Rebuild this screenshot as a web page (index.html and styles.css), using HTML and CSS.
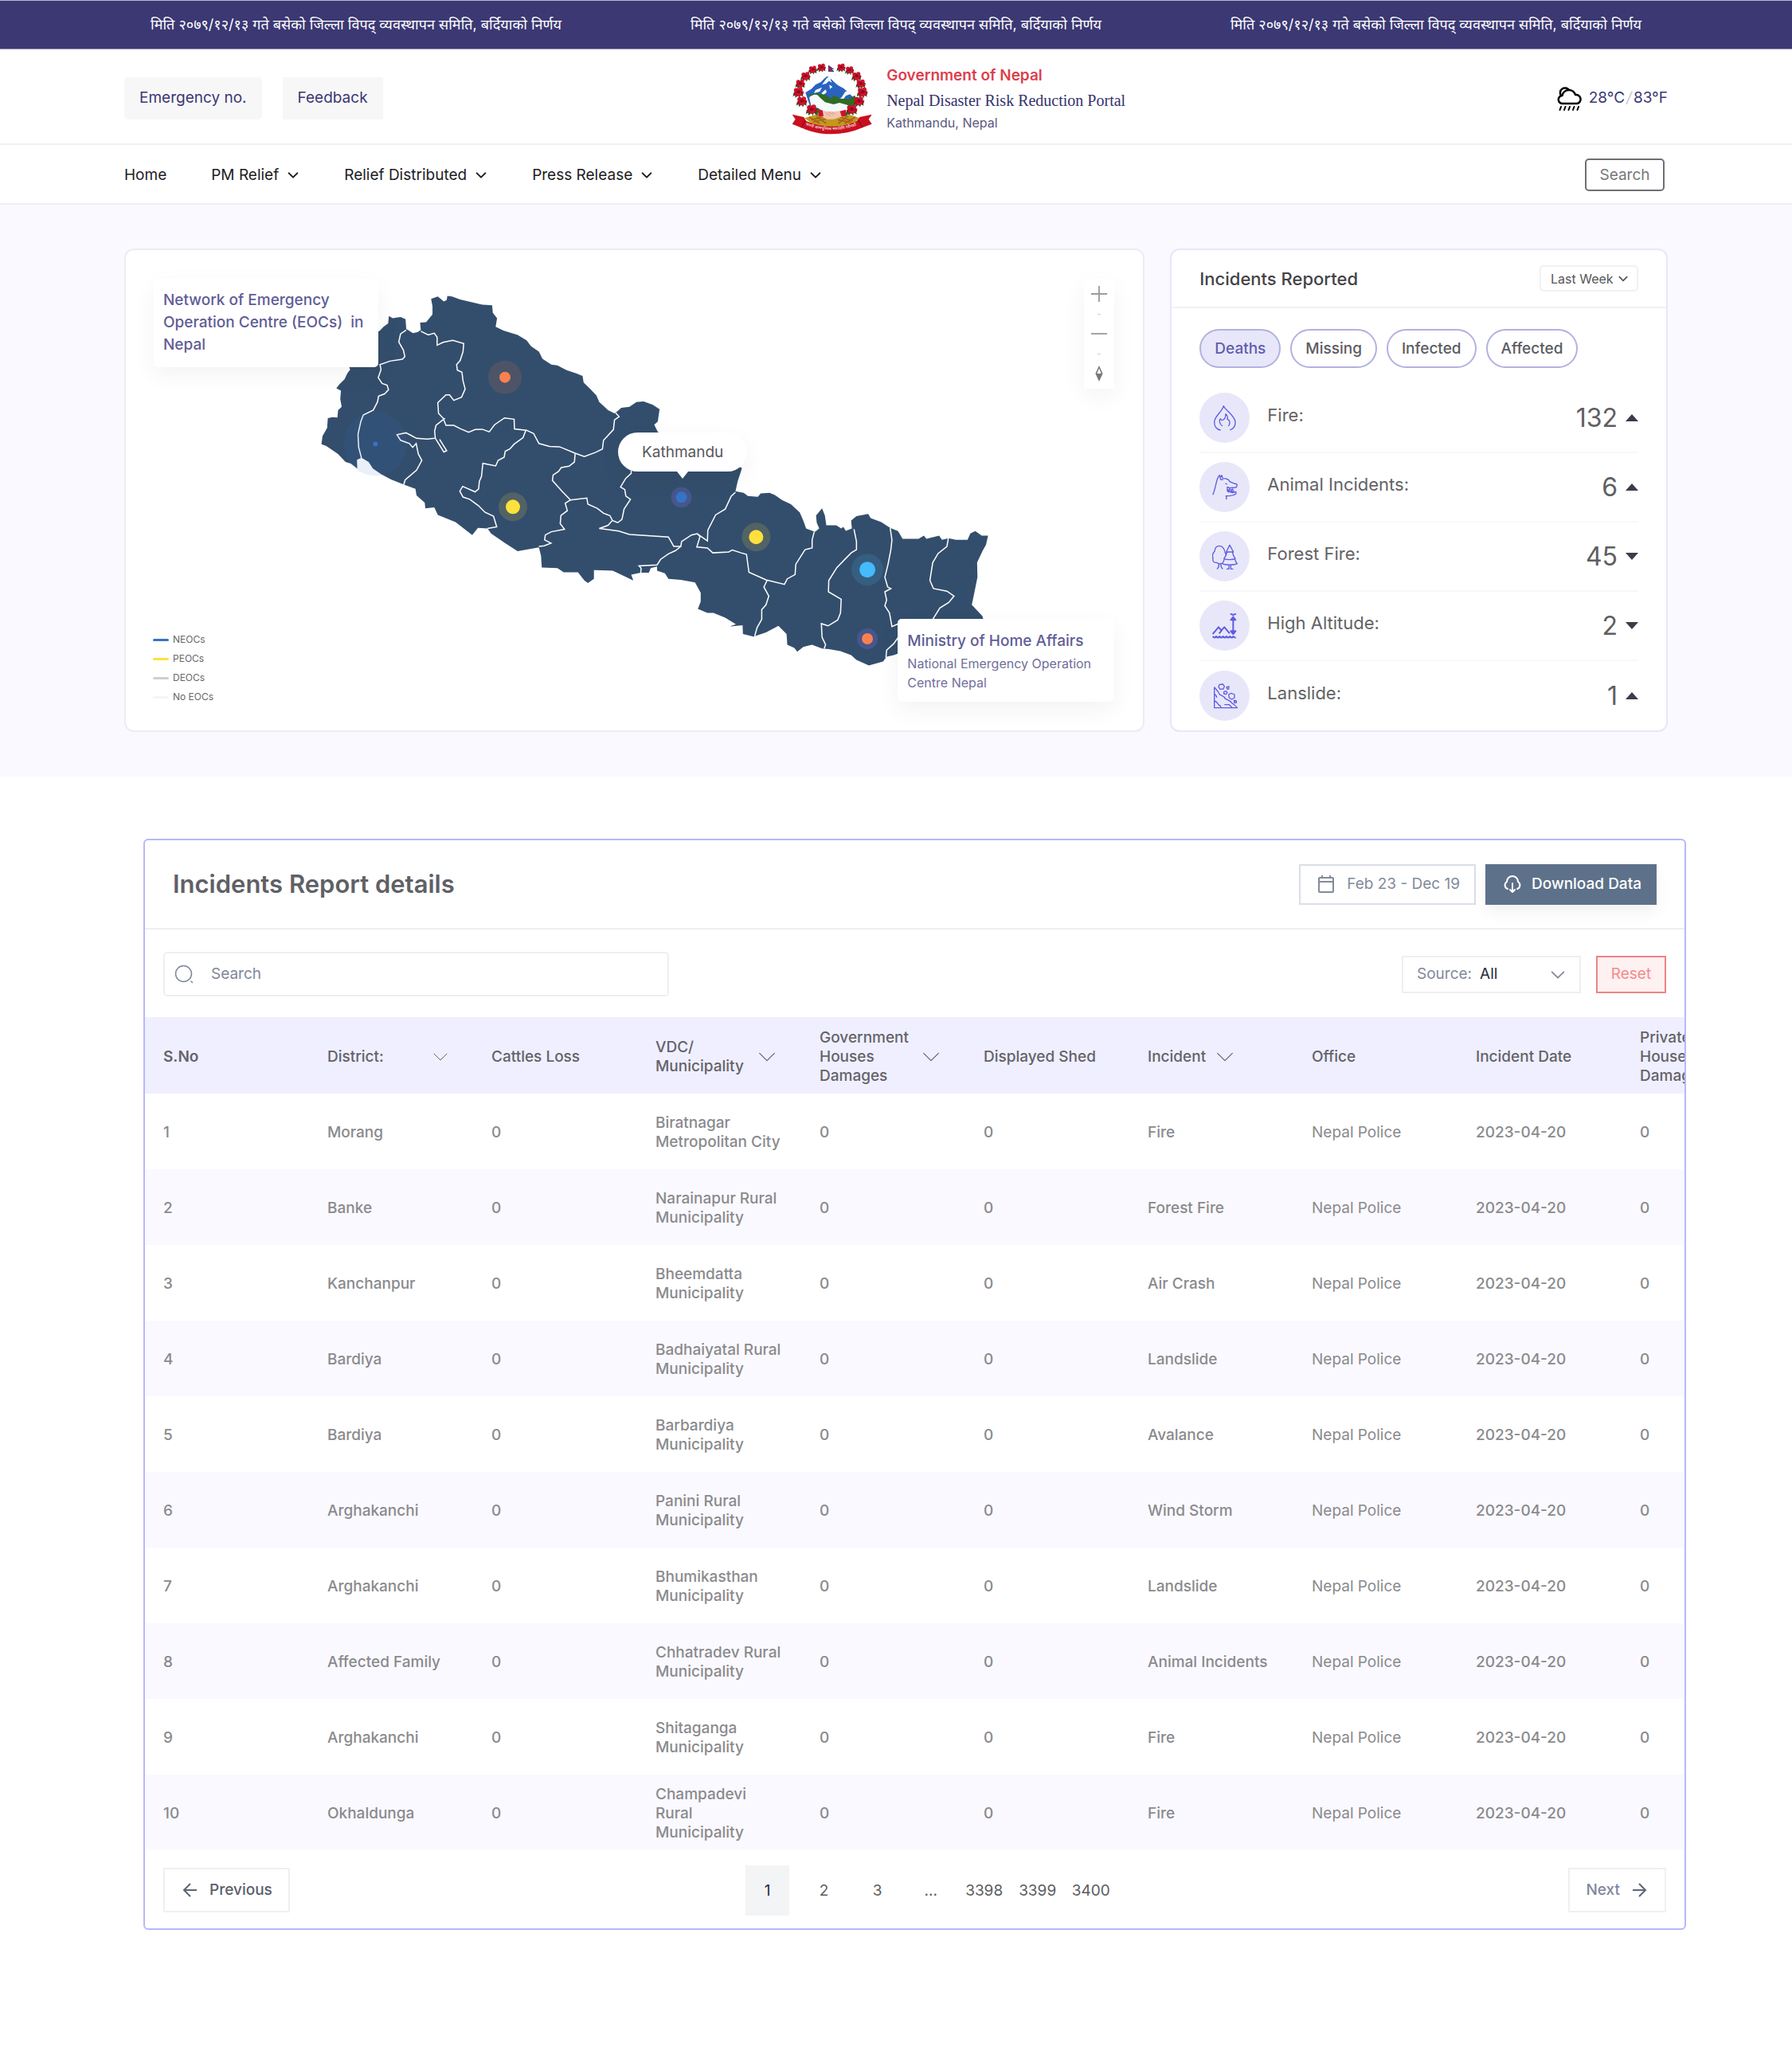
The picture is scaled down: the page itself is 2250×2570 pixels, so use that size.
FILE: index.html
```html
<!DOCTYPE html>
<html lang="en">
<head>
    <meta charset="UTF-8">
    <meta name="viewport" content="width=device-width, initial-scale=1.0">
    <title>Nepal Disaster Risk Reduction Portal</title>
    <link rel="stylesheet" href="styles.css">
</head>
<body>
    <!-- shared shapes -->
    <svg class="sprite" aria-hidden="true">
        <symbol id="chevron" viewBox="0 0 24 24"><path d="M4 8l8 8 8-8" fill="none" stroke="currentColor" stroke-linecap="round" stroke-linejoin="round"/></symbol>
        <symbol id="flower" viewBox="-20 -20 40 40">
            <path d="M-17 2l-3 14 8-6 1 10 9-8 6 9 2-10 10 5-3-12 6-7z" fill="#1f5a20"/>
            <circle cx="-8" cy="-6" r="8" fill="#c8102e"/><circle cx="6" cy="-8" r="8" fill="#d3142f"/>
            <circle cx="10" cy="3" r="7" fill="#b50d26"/><circle cx="-9" cy="5" r="7" fill="#b50d26"/>
            <circle cx="1" cy="7" r="8" fill="#d3142f"/><circle cx="0" cy="-1" r="6" fill="#8f0a1c"/>
        </symbol>
    </svg>

    <div class="ticker">
        <span>मिति २०७९/१२/१३ गते बसेको जिल्ला विपद् व्यवस्थापन समिति, बर्दियाको निर्णय</span>
        <span>मिति २०७९/१२/१३ गते बसेको जिल्ला विपद् व्यवस्थापन समिति, बर्दियाको निर्णय</span>
        <span>मिति २०७९/१२/१३ गते बसेको जिल्ला विपद् व्यवस्थापन समिति, बर्दियाको निर्णय</span>
    </div>

    <header class="header">
        <div class="header-links">
            <a class="chip rounded" href="#">Emergency no.</a>
            <a class="chip" href="#">Feedback</a>
        </div>
        <div class="brand">
            <svg class="emblem" viewBox="0 0 345 300" role="img" aria-label="Emblem of Nepal">
                <!-- mountains and hills -->
                <path d="M70 130l22-14 16-16 20-10 14-14 10-8 12 8 14 14 14 12 22 12 20 18 24 24-10 46H94z" fill="#2a62c0"/>
                <path d="M150 76l10-8 12 8-8 4 6 12-12-6-10 10-16 4zM108 120l24-10-8 16-22 6zM130 132l16-14 4 10-14 12zM206 148l14-22 14-2 4 12-16 6-10 14-22 4zM160 100l12 8-10 8z" fill="#f2f8fb"/>
                <path d="M84 138l28-6 34 6 20 14 12-12 22 12 32 2 24-14 8 22-14 34-24 20H110l-20-30z" fill="#2f6b23"/>
                <path d="M84 148c14-12 30-16 38-2l22 20 32 8 22-6 34 10 4 16-16 14-40 6-34-6-28-20-26-6z" fill="#f4fafb"/>
                <!-- wheat base and hands -->
                <path d="M66 226l40-12 68 12 64-12 36 12-24 20c-48 22-108 22-156 0z" fill="#c09a1a"/>
                <path d="M92 232l52-12M100 240l50-12M196 222l52 14M192 232l50 10M84 222l40 24M258 222l-40 24M112 220l36 26M230 218l-36 28" stroke="#a8611d" stroke-width="5"/>
                <path d="M118 196l32 4 24 2 30-4 14 10-14 14-28 8-26 0-22-12-12-4z" fill="#f3c3ae"/>
                <path d="M146 206l18 12M156 202l18 12M168 202l14 10" stroke="#c98871" stroke-width="2"/>
                <path d="M116 196h18l4 22-18 2zM200 200l22-6 2 24-18 2z" fill="#c9152f"/>
                <!-- wreath -->
                <g>
                    <use href="#flower" x="113" y="17" width="36" height="36"/><use href="#flower" x="80" y="25" width="36" height="36"/>
                    <use href="#flower" x="51" y="48" width="40" height="40"/><use href="#flower" x="31" y="76" width="40" height="40"/>
                    <use href="#flower" x="22" y="106" width="44" height="44"/><use href="#flower" x="35" y="140" width="44" height="44"/>
                    <use href="#flower" x="71" y="170" width="46" height="46"/>
                    <use href="#flower" x="187" y="17" width="36" height="36"/><use href="#flower" x="219" y="27" width="36" height="36"/>
                    <use href="#flower" x="243" y="48" width="40" height="40"/><use href="#flower" x="259" y="76" width="40" height="40"/>
                    <use href="#flower" x="263" y="106" width="44" height="44"/><use href="#flower" x="250" y="140" width="44" height="44"/>
                    <use href="#flower" x="222" y="170" width="46" height="46"/>
                </g>
                <path d="M157 28v22h20l-12-9h10z" fill="#c9152f" stroke="#243a8f" stroke-width="3"/>
                <!-- ribbon -->
                <path d="M20 212l44 10 8 14c60 28 140 28 192 0l10-14 46-10-12 18 12 18-36 14c-70 32-160 32-230 0l-34-14 12-18z" fill="#c9101f"/>
                <path d="M54 262l16-28M284 262l-14-28" stroke="#7d0a14" stroke-width="3"/>
                <path id="motto" d="M70 252q102 40 208-4" fill="none"/>
                <text class="motto"><textPath href="#motto">जननी जन्मभूमिश्च स्वर्गादपि गरीयसी</textPath></text>
            </svg>
            <div>
                <div class="brand-gov">Government of Nepal</div>
                <div class="brand-name">Nepal Disaster Risk Reduction Portal</div>
                <div class="brand-place">Kathmandu, Nepal</div>
            </div>
        </div>
        <div class="weather">
            <svg width="32" height="32" viewBox="0 0 32 32" fill="none" stroke="#000" stroke-width="2.500" stroke-linecap="round" stroke-linejoin="round">
                <path d="M5 13a6 6 0 1 1 10-7"/>
                <path d="M7 23a5 5 0 0 1-.5-10A8.500 8.500 0 0 1 23 12a5.500 5.500 0 0 1 2 11z"/>
                <path d="M5 27l-1.500 4M10.500 27L9 31M16 27l-1.500 4M21.500 27L20 31M27 27l-1.500 4" stroke-width="2"/>
            </svg>
            <span>28°C<i>/</i>83°F</span>
        </div>
    </header>

    <nav class="nav">
        <a href="#">Home</a>
        <a href="#">PM Relief <svg><use href="#chevron"/></svg></a>
        <a href="#">Relief Distributed <svg><use href="#chevron"/></svg></a>
        <a href="#">Press Release <svg><use href="#chevron"/></svg></a>
        <a href="#">Detailed Menu <svg><use href="#chevron"/></svg></a>
        <button class="nav-search" type="button">Search</button>
    </nav>

    <section class="hero">
        <div class="map-card">
            <svg class="map" viewBox="0 0 1280 604" role="img" aria-label="Map of Nepal">
                <g transform="translate(-7 -13) scale(.4464 .4082)">
                    <path class="land" d="M567 630L570 605 583 580 585 550 598 547 612 548 614 525 624 515 620 490 622 465 609 458 618 445 632 430 640 412 648 400 645 392 700 300 732 280 742 268 755 258 757 235 768 242 790 238 804 245 806 275 825 288 838 285 847 278 845 255 862 254 880 230 880 205 876 182 895 175 912 190 920 186 922 173 935 175 958 184 1020 200 1048 202 1050 225 1062 242 1058 268 1080 280 1120 293 1145 310 1158 328 1180 345 1190 367 1215 385 1232 387 1258 402 1285 412 1303 420 1306 440 1325 460 1342 480 1350 500 1375 525 1393 535 1402 528 1412 518 1435 515 1455 500 1475 498 1500 508 1520 522 1515 560 1505 570 1515 592 1600 640 1752 703 1750 712 1740 745 1734 775 1757 780 1769 790 1797 792 1805 782 1830 780 1845 787 1865 802 1890 815 1915 840 1925 865 1933 890 1958 900 1970 890 1963 872 1961 850 1978 828 1986 850 1990 880 2018 880 2032 890 2038 885 2045 897 2062 890 2060 865 2075 852 2108 845 2115 858 2145 870 2170 888 2192 898 2205 922 2250 922 2265 912 2272 922 2308 912 2316 925 2335 920 2355 925 2388 925 2396 905 2410 898 2428 912 2446 912 2440 940 2430 960 2415 995 2416 1040 2405 1100 2400 1125 2430 1160 2432 1168 2420 1200 2200 1272 2180 1280 2160 1285 2150 1300 2110 1312 2075 1295 2060 1280 2030 1268 1998 1262 1978 1260 1950 1248 1925 1255 1908 1270 1900 1258 1880 1248 1878 1215 1855 1190 1820 1210 1785 1223 1755 1215 1754 1188 1718 1192 1735 1185 1705 1165 1672 1150 1655 1150 1628 1138 1636 1115 1636 1088 1620 1056 1580 1048 1545 1045 1535 1028 1513 1020 1513 1007 1495 1012 1490 1026 1467 1026 1440 1032 1446 1050 1388 1020 1335 1018 1335 1045 1318 1058 1308 1050 1290 1025 1250 1025 1232 1012 1188 1010 1186 975 1180 948 1145 955 1120 960 1085 935 1045 905 1035 890 1008 888 992 910 945 870 895 848 885 825 860 828 858 810 835 788 832 768 800 755 762 738 735 722 712 705 700 685 680 672 667 678 668 705 650 690 635 685 613 660 580 635z"/>
                    <g class="borders">
                        <path d="M806 278L790 290 785 315 798 340 802 360 795 368 760 374 732 385 735 400 727 425 738 443 752 448 756 462 745 475 728 482 725 500 713 525 685 540 678 560 670 600 672 640 678 665 680 675"/>
                        <path d="M847 282L868 293 885 288 893 300 893 325 910 316 937 310 968 320 966 345 958 372 948 385 950 402 963 408 966 435 972 460 962 485 940 495 928 478 918 478 895 502 897 535 910 550 918 572 940 572 958 582 982 593 1000 585 1020 584 1040 592 1055 570 1083 549 1110 553 1111 583 1145 587 1165 597 1180 628 1210 637 1238 638 1282 658 1308 668 1340 655 1359 645 1362 618 1390 585 1393 555 1406 545 1396 533"/>
                        <path d="M915 550L890 572 886 590 888 612 912 654 920 650 900 615M886 612L865 614 835 612 818 602 805 595 780 601 790 618 815 628 824 640 834 628 840 660 850 680 835 710 803 740 799 755"/>
                        <path d="M1143 588L1135 610 1110 630 1098 645 1085 652 1082 670 1065 680 1058 697 1022 689 1018 730 1012 745 1010 768 1000 777 965 760 957 775 966 793 985 800 1010 820 1028 840 1052 852 1061 885 1035 890"/>
                        <path d="M1282 660L1280 685 1265 698 1243 702 1235 714 1220 725 1218 742 1245 775 1269 802 1315 796 1318 815 1345 828 1362 843 1380 850 1387 865 1402 872 1414 862 1420 830 1438 800 1425 790 1422 770 1410 762 1425 735 1440 720 1440 712"/>
                        <path d="M1269 802L1254 812 1260 835 1242 850 1240 875 1252 892 1215 900 1198 910 1196 925 1214 935 1195 943 1180 945M1387 865L1375 880 1350 890 1405 898 1435 908 1545 916 1560 945 1580 945 1582 930 1610 910 1626 906 1655 928 1656 895 1678 848 1705 830 1722 790 1734 778"/>
                        <path d="M1580 945L1565 958 1545 968 1523 985 1513 1002 1462 1005 1468 1012 1467 1026M1626 906L1634 915 1625 947 1655 950 1670 965 1715 962 1725 956 1750 965 1765 970 1772 1025 1820 1048 1872 1062 1880 1045 1902 1032 1904 1000 1930 955 1950 950 1950 925 1956 900"/>
                        <path d="M1823 1050L1814 1070 1828 1098 1820 1125 1808 1140 1808 1170 1795 1195 1788 1222M2068 892L2075 930 2075 955 2060 965 2020 1010 1997 1050 1996 1085 2032 1108 2030 1150 2022 1172 1995 1190 1976 1183 1978 1225 1988 1248 1984 1260"/>
                        <path d="M2170 888L2175 925 2172 955 2164 1000 2155 1040 2163 1070 2172 1075 2155 1085 2160 1110 2155 1128 2168 1150 2175 1192 2200 1180M2195 1222L2180 1245 2160 1265 2158 1288M2334 920L2330 945 2305 967 2290 995 2282 1050 2292 1075 2330 1083 2350 1098 2335 1118 2310 1135 2290 1170"/>
                    </g>
                </g>
                <!-- centres -->
                <circle cx="314" cy="244" r="40" fill="#2f6fd0" fill-opacity=".1"/><circle cx="314" cy="244" r="3" fill="#3574c6"/>
                <circle cx="477" cy="160" r="21" fill="#ff8250" fill-opacity=".13"/><circle cx="477" cy="160" r="7" fill="#fa814f"/>
                <circle cx="487" cy="323" r="18" fill="#ffe03d" fill-opacity=".15"/><circle cx="487" cy="323" r="9" fill="#ffe03d"/>
                <circle cx="699" cy="311" r="13" fill="#6d67c8" fill-opacity=".35"/><circle cx="699" cy="311" r="7" fill="#3574c6"/>
                <circle cx="793" cy="361" r="18" fill="#ffe03d" fill-opacity=".15"/><circle cx="793" cy="361" r="9" fill="#ffe03d"/>
                <circle cx="933" cy="402" r="20" fill="#45baff" fill-opacity=".15"/><circle cx="933" cy="402" r="10" fill="#45baff"/>
                <circle cx="933" cy="489" r="13" fill="#6d67c8" fill-opacity=".35"/><circle cx="933" cy="489" r="7" fill="#fa814f"/>
            </svg>
            <div class="map-note map-title">Network of Emergency Operation Centre (EOCs)&nbsp; in Nepal</div>
            <div class="map-pin">Kathmandu</div>
            <div class="map-zoom">
                <button type="button" aria-label="Zoom in"><svg viewBox="0 0 24 24"><path d="M12 1v22M1 12h22"/></svg></button>
                <i></i>
                <button type="button" aria-label="Zoom out"><svg viewBox="0 0 24 24"><path d="M1 12h22"/></svg></button>
                <i></i>
                <button type="button" aria-label="Reset north"><svg viewBox="0 0 24 24"><path d="M12 1l-5 11 5 11 5-11zM12 5l3 7H9z" fill="#77787b" fill-rule="evenodd" stroke="none"/></svg></button>
            </div>
            <ul class="legend">
                <li class="neoc">NEOCs</li>
                <li class="peoc">PEOCs</li>
                <li class="deoc">DEOCs</li>
                <li class="none">No EOCs</li>
            </ul>
            <div class="map-note map-office">
                <strong>Ministry of Home Affairs</strong>
                National Emergency Operation Centre Nepal
            </div>
        </div>

        <div class="incidents">
            <div class="incidents-head">
                <h2>Incidents Reported</h2>
                <div class="period">
                    <select aria-label="Period"><option>Last Week</option></select>
                    <svg><use href="#chevron"/></svg>
                </div>
            </div>
            <div class="pills">
                <button class="active" type="button">Deaths</button>
                <button type="button">Missing</button>
                <button type="button">Infected</button>
                <button type="button">Affected</button>
            </div>
            <ul class="stats">
                <li>
                    <span class="stat-icon"><svg viewBox="0 0 96 96"><path d="M32 93C14 90 8 76 8 62 9 40 38 24 43 2c5 14 42 36 44 60 1 16-8 26-20 31M39 78C28 72 25 57 31 50c2 2 3 6 6 6 8-2 14-12 14-24 8 6 8 14 6 20 10 2 12 18 4 26"/></svg></span>
                    <span class="stat-name">Fire:</span><span class="stat-count">132</span><span class="arrow up"></span>
                </li>
                <li>
                    <span class="stat-icon"><svg viewBox="0 0 96 96"><path d="M2 76C14 50 14 24 22 11c2-4 4-8 6-9l2 8 6-8 4 12c14 0 24 6 26 12 8 4 18 8 27 10 2 8-2 11-6 12l-22 2-8-4v16l20 6 12-4 1 8c-8 6-20 8-38 8 2 4 2 8 1 13M30 10l2 8 9 1M49 33l8 3M57 54l4 6 5-6 5 6 5-6 5 6M60 66l5-4 5 4 5-4 5 4 3-4"/></svg></span>
                    <span class="stat-name">Animal Incidents:</span><span class="stat-count">6</span><span class="arrow up"></span>
                </li>
                <li>
                    <span class="stat-icon"><svg viewBox="0 0 96 96"><path d="M66 4L53 30h27zM56 30c-2 10-6 18-12 25 10 5 34 5 43 0-6-7-9-15-11-25M46 56c-2 8-4 13-8 18 12 6 44 6 56 0-5-6-8-11-9-18M54 94h9V78M79 94h-9V78M48 29C44 14 38 7 27 7 15 7 10 17 9 28 0 36 1 48 3 54c-3 10 4 18 14 16 6 6 14 5 20 2M48 29c-2 3 6 4 2 12M18 94c6-4 8-10 7-20M40 94c-6-4-8-10-7-20"/></svg></span>
                    <span class="stat-name">Forest Fire:</span><span class="stat-count">45</span><span class="arrow down"></span>
                </li>
                <li>
                    <span class="stat-icon bold"><svg viewBox="0 0 96 96"><path d="M2 78l22-26 10 12 12-12 20 24M26 76l12-14M2 87c5 6 8 6 13 0 5 6 8 6 13 0 5 6 8 6 13 0 5 6 8 6 13 0 5 6 8 6 13 0 5 6 8 6 13 0 4 5 6 5 9 4M79 18v56M68 4c5-2 8 0 11 3 3-3 6-5 11-3"/><path d="M79 14l9 11H70zM79 78l9-11H70z" fill="#5e5ce0"/></svg></span>
                    <span class="stat-name">High Altitude:</span><span class="stat-count">2</span><span class="arrow down"></span>
                </li>
                <li>
                    <span class="stat-icon"><svg viewBox="0 0 96 96"><path d="M8 14v78h86C88 84 82 78 74 74 68 64 56 62 50 58 44 46 30 46 27 40 24 30 14 22 8 14M8 40c6 2 8 6 9 14M8 66c12 0 12 16 22 18l4 8M46 80h18l12 12M28 4l12-1 6 8-4 10-12 1-6-9zM54 14l9-2-1 9-5 1zM44 32l8-3 5 6-5 6-8-2zM62 42l10-5 12 5v12l-10 6-10-6zM82 64l9 2v7l-7 0z"/></svg></span>
                    <span class="stat-name">Lanslide:</span><span class="stat-count">1</span><span class="arrow up"></span>
                </li>
            </ul>
        </div>
    </section>

    <section class="report">
        <div class="report-head">
            <h1>Incidents Report details</h1>
            <button class="date" type="button">
                <svg width="24" height="24" viewBox="0 0 24 24" fill="none" stroke="currentColor" stroke-width="2"><rect x="3" y="4" width="18" height="18" rx="1"/><path d="M3 9h18M7 1v4M17 1v4"/></svg>
                Feb 23 - Dec 19
            </button>
            <button class="download" type="button">
                <svg width="24" height="24" viewBox="0 0 24 24" fill="none" stroke="currentColor" stroke-width="2" stroke-linecap="round" stroke-linejoin="round"><path d="M6 18a5 5 0 0 1-1-9 7 7 0 0 1 14 0 5 5 0 0 1-1 9M12 11v11M9 19l3 3 3-3"/></svg>
                Download Data
            </button>
        </div>
        <div class="report-tools">
            <label class="search">
                <svg width="24" height="24" viewBox="0 0 24 24" fill="none" stroke="currentColor" stroke-width="1.500" stroke-linecap="round"><circle cx="11.500" cy="11.500" r="10"/><path d="M21 21l1.500 1.500"/></svg>
                <input type="search" placeholder="Search" aria-label="Search incidents">
            </label>
            <div class="source">
                <label for="source">Source:</label>
                <select id="source"><option>All</option></select>
                <svg><use href="#chevron"/></svg>
            </div>
            <button class="reset" type="button">Reset</button>
        </div>
        <div class="table-wrap">
            <table>
                <thead>
                    <tr>
                        <th class="num">S.No</th>
                        <th><div class="sort wide">District: <svg class="small"><use href="#chevron"/></svg></div></th>
                        <th>Cattles Loss</th>
                        <th><div class="sort">VDC/<br>Municipality <svg><use href="#chevron"/></svg></div></th>
                        <th><div class="sort">Government<br>Houses<br>Damages <svg><use href="#chevron"/></svg></div></th>
                        <th>Displayed Shed</th>
                        <th><div class="sort near">Incident <svg><use href="#chevron"/></svg></div></th>
                        <th>Office</th>
                        <th>Incident Date</th>
                        <th>Private<br>Houses<br>Damages</th>
                    </tr>
                </thead>
                <tbody>
                    <tr><td>1</td><td>Morang</td><td>0</td><td>Biratnagar Metropolitan City</td><td>0</td><td>0</td><td>Fire</td><td>Nepal Police</td><td>2023-04-20</td><td>0</td></tr>
                    <tr><td>2</td><td>Banke</td><td>0</td><td>Narainapur Rural Municipality</td><td>0</td><td>0</td><td>Forest Fire</td><td>Nepal Police</td><td>2023-04-20</td><td>0</td></tr>
                    <tr><td>3</td><td>Kanchanpur</td><td>0</td><td>Bheemdatta Municipality</td><td>0</td><td>0</td><td>Air Crash</td><td>Nepal Police</td><td>2023-04-20</td><td>0</td></tr>
                    <tr><td>4</td><td>Bardiya</td><td>0</td><td>Badhaiyatal Rural Municipality</td><td>0</td><td>0</td><td>Landslide</td><td>Nepal Police</td><td>2023-04-20</td><td>0</td></tr>
                    <tr><td>5</td><td>Bardiya</td><td>0</td><td>Barbardiya Municipality</td><td>0</td><td>0</td><td>Avalance</td><td>Nepal Police</td><td>2023-04-20</td><td>0</td></tr>
                    <tr><td>6</td><td>Arghakanchi</td><td>0</td><td>Panini Rural Municipality</td><td>0</td><td>0</td><td>Wind Storm</td><td>Nepal Police</td><td>2023-04-20</td><td>0</td></tr>
                    <tr><td>7</td><td>Arghakanchi</td><td>0</td><td>Bhumikasthan Municipality</td><td>0</td><td>0</td><td>Landslide</td><td>Nepal Police</td><td>2023-04-20</td><td>0</td></tr>
                    <tr><td>8</td><td>Affected Family</td><td>0</td><td>Chhatradev Rural Municipality</td><td>0</td><td>0</td><td>Animal Incidents</td><td>Nepal Police</td><td>2023-04-20</td><td>0</td></tr>
                    <tr><td>9</td><td>Arghakanchi</td><td>0</td><td>Shitaganga Municipality</td><td>0</td><td>0</td><td>Fire</td><td>Nepal Police</td><td>2023-04-20</td><td>0</td></tr>
                    <tr><td>10</td><td>Okhaldunga</td><td>0</td><td>Champadevi<br>Rural<br>Municipality</td><td>0</td><td>0</td><td>Fire</td><td>Nepal Police</td><td>2023-04-20</td><td>0</td></tr>
                </tbody>
            </table>
        </div>
        <div class="pager">
            <button class="step" type="button">
                <svg width="24" height="24" viewBox="0 0 24 24"><path d="M20 12H4M12 4l-8 8 8 8"/></svg>
                Previous
            </button>
            <div class="pages">
                <button class="current" type="button">1</button>
                <button type="button">2</button>
                <button type="button">3</button>
                <span>...</span>
                <button type="button">3398</button>
                <button type="button">3399</button>
                <button type="button">3400</button>
            </div>
            <button class="step next" type="button">
                Next
                <svg width="24" height="24" viewBox="0 0 24 24"><path d="M4 12h16M12 4l8 8-8 8"/></svg>
            </button>
        </div>
    </section>
</body>
</html>
```
FILE: styles.css
```css
* {
    box-sizing: border-box;
}
body {
    margin: 0;
    background: #fff;
    font-family: Inter, "Noto Sans", sans-serif;
    font-size: 19px;
    line-height: 24px;
    color: #2b2b2e;
}
button, input, select {
    font: inherit;
    color: inherit;
    margin: 0;
}
button {
    cursor: pointer;
    padding: 0;
    border: none;
    background: none;
}
select {
    appearance: none;
    border: none;
    background: none;
    padding: 0;
}
a {
    color: inherit;
    text-decoration: none;
}
ul {
    list-style: none;
    margin: 0;
    padding: 0;
}
h1, h2 {
    margin: 0;
}
.sprite {
    position: absolute;
    width: 0;
    height: 0;
}

/* top notice bar */
.ticker {
    display: flex;
    justify-content: space-between;
    align-items: center;
    height: 62px;
    padding: 0 189px;
    background: #3b3873;
    border-top: 1px solid #b9b8cc;
    border-bottom: 1px solid #8f8db4;
    color: #fff;
    font-size: 18px;
    white-space: nowrap;
}

.header {
    display: grid;
    grid-template-columns: 55fr auto 45fr;
    align-items: center;
    height: 120px;
    padding: 4px 156px 0;
    border-bottom: 2px solid #f0f0f2;
}
.header-links {
    display: flex;
    gap: 26px;
}
.chip {
    padding: 14px 19px 15px;
    background: #f7f7f7;
    color: #3b3873;
}
.rounded {
    border-radius: 5px;
}
.brand {
    display: flex;
    align-items: center;
    gap: 10px;
}
.emblem {
    width: 115px;
    height: 100px;
}
.motto {
    font-size: 15px;
    fill: #fff;
}
.brand-gov {
    color: #dc3f4e;
    font-weight: 600;
    line-height: 30px;
}
.brand-name {
    font-family: "Liberation Serif", serif;
    font-size: 20px;
    line-height: 32px;
    color: #34326e;
}
.brand-place {
    font-size: 16px;
    line-height: 24px;
    color: #5b597f;
}
.weather {
    display: flex;
    justify-content: flex-end;
    align-items: center;
    gap: 8px;
    color: #3b3873;
}
.weather i {
    color: #c9c9cf;
    margin: 0 2px;
}

.nav {
    display: flex;
    align-items: center;
    gap: 56px;
    height: 75px;
    padding: 2px 156px 0;
    border-bottom: 2px solid #f0f0f2;
    color: #1d1d1f;
}
.nav a {
    display: flex;
    align-items: center;
    gap: 10px;
}
.nav svg {
    width: 16px;
    height: 16px;
    stroke-width: 3px;
}
.nav-search {
    margin-left: auto;
    margin-right: 4px;
    width: 100px;
    height: 41px;
    border: 2px solid #6f6f72;
    border-radius: 5px;
    color: #77777a;
}

/* map and incident counts */
.hero {
    display: grid;
    grid-template-columns: 1280fr 624fr;
    gap: 32px;
    padding: 55px 156px 56px;
    background: #faf9ff;
}
.map-card, .incidents {
    background: #fff;
    border: 2px solid #edecf3;
    border-radius: 12px;
}
.map-card {
    position: relative;
}
.map {
    display: block;
    width: 100%;
}
.land {
    fill: #334e6c;
}
.borders path {
    fill: none;
    stroke: #fff;
    stroke-width: 1.500px;
    vector-effect: non-scaling-stroke;
}
.map-note {
    position: absolute;
    background: #fff;
    border-radius: 5px;
    box-shadow: 0 10px 30px rgba(0, 0, 0, .05);
    color: #5f5d96;
}
.map-title {
    left: 35px;
    top: 36px;
    width: 282px;
    padding: 13px 12px 14px;
    line-height: 28px;
    font-weight: 500;
}
.map-office {
    right: 36px;
    bottom: 36px;
    width: 272px;
    padding: 12px;
    font-size: 16px;
    color: #716f9b;
}
.map-office strong {
    display: block;
    font-size: 19px;
    line-height: 32px;
    font-weight: 500;
    color: #5f5d96;
}
.map-pin {
    position: absolute;
    left: 618px;
    top: 229px;
    padding: 13px 30px 12px;
    border-radius: 25px;
    background: #fff;
    box-shadow: 0 10px 30px rgba(0, 0, 0, .05);
    color: #58585b;
}
.map-pin::after {
    content: "";
    position: absolute;
    left: 50%;
    top: 100%;
    margin-left: -7px;
    border: 7px solid transparent;
    border-top: 9px solid #fff;
    border-bottom: none;
}
.map-zoom {
    position: absolute;
    right: 36px;
    top: 36px;
    display: flex;
    flex-direction: column;
    align-items: center;
    justify-content: space-between;
    width: 38px;
    height: 138px;
    padding: 8px 0;
    background: #fff;
    box-shadow: 0 10px 30px rgba(0, 0, 0, .05);
}
.map-zoom button, .map-zoom svg {
    display: block;
    width: 22px;
    height: 22px;
}
.map-zoom svg {
    fill: none;
    stroke: #9b9c9f;
    stroke-width: 2px;
}
.map-zoom i {
    width: 4px;
    height: 1px;
    background: #cfcfd2;
}
.legend {
    position: absolute;
    left: 34px;
    bottom: 30px;
    font-size: 12px;
    color: #68686b;
}
.legend li {
    display: flex;
    align-items: center;
    gap: 5px;
}
.legend li::before {
    content: "";
    width: 20px;
    height: 3px;
    border-radius: 2px;
    background: currentColor;
}
.legend .neoc::before { background: #3574c6; }
.legend .peoc::before { background: #ffe03d; }
.legend .deoc::before { background: #cfcfcf; }
.legend .none::before { background: #f5f5f5; }

.incidents {
    border-color: #e8e6fa;
}
.incidents-head {
    display: flex;
    justify-content: space-between;
    align-items: center;
    height: 73px;
    padding: 0 35px;
    border-bottom: 2px solid #f1f1f3;
}
.incidents h2 {
    font-size: 22px;
    font-weight: 500;
    color: #434346;
}
.period {
    position: relative;
    font-size: 16px;
    color: #56565a;
}
.period select {
    width: 124px;
    height: 33px;
    padding: 0 12px;
    border: 2px solid #f1f1f3;
    border-radius: 5px;
}
.period svg {
    position: absolute;
    right: 12px;
    top: 10px;
    width: 14px;
    height: 14px;
    stroke-width: 3px;
    pointer-events: none;
}
.pills {
    display: flex;
    gap: 12px;
    padding: 26px 35px 20px;
}
.pills button {
    height: 49px;
    padding: 0 17px;
    border: 2px solid #b3b1e0;
    border-radius: 25px;
    color: #5c5c60;
    font-weight: 500;
}
.pills .active {
    background: #e8e7f9;
    color: #5f5db0;
}
.stats {
    margin: 0 35px;
}
.stats li {
    display: grid;
    grid-template-columns: 63px 1fr auto 16px;
    align-items: center;
    height: 87px;
    border-bottom: 2px solid #f8f8fa;
}
.stats li:last-child {
    border-bottom: none;
}
.stat-icon {
    display: flex;
    align-items: center;
    justify-content: center;
    width: 63px;
    height: 63px;
    border-radius: 50%;
    background: #e8e7f9;
}
.stat-icon svg {
    width: 32px;
    height: 32px;
    fill: none;
    stroke: #5e5ce0;
    stroke-width: 4px;
    stroke-linejoin: round;
}
.stat-icon.bold svg {
    stroke-width: 6px;
}
.stat-name {
    padding: 0 0 8px 22px;
    font-size: 22px;
    color: #636366;
}
.stat-count {
    padding-right: 10px;
    font-size: 32px;
    color: #5f5f62;
}
.arrow {
    border: 8px solid transparent;
}
.arrow.up {
    border-top: none;
    border-bottom: 9px solid #3c3b4a;
}
.arrow.down {
    border-bottom: none;
    border-top: 9px solid #3c3b4a;
}

/* report table */
.report {
    margin: 78px 133px 149px 180px;
    border: 2px solid #b7b8fb;
    border-radius: 6px;
    overflow: hidden;
}
.report-head {
    display: flex;
    align-items: center;
    gap: 12px;
    height: 112px;
    padding: 0 35px;
    border-bottom: 2px solid #eeeef1;
}
.report h1 {
    margin-right: auto;
    font-size: 31px;
    line-height: 40px;
    font-weight: 600;
    color: #606066;
}
.report-head button {
    display: flex;
    align-items: center;
    height: 51px;
}
.date {
    gap: 14px;
    padding: 0 18px 0 20px;
    border: 2px solid #dadee6;
    color: #838a9b;
}
.download {
    gap: 12px;
    padding: 0 19px 0 22px;
    background: #5e718a;
    color: #fff;
    font-weight: 500;
    box-shadow: 0 10px 20px rgba(0, 0, 0, .05);
}
.report-tools {
    display: flex;
    align-items: center;
    gap: 19px;
    height: 110px;
    padding: 2px 23px 0;
}
.search {
    display: flex;
    align-items: center;
    gap: 22px;
    width: 635px;
    height: 56px;
    margin-right: auto;
    padding: 0 12px;
    border: 2px solid #efeff1;
    border-radius: 5px;
    color: #7f889a;
}
.search input {
    flex: 1;
    border: none;
    outline: none;
    padding: 0;
    background: none;
}
.search input::placeholder {
    color: #7f889a;
    opacity: 1;
}
.source {
    position: relative;
    display: flex;
    align-items: center;
    gap: 10px;
    width: 225px;
    height: 47px;
    padding-left: 17px;
    border: 2px solid #efeff2;
    color: #838a9b;
}
.source select {
    flex: 1;
    height: 100%;
    color: #2b2b3b;
}
.source svg {
    position: absolute;
    right: 16px;
    top: 11px;
    width: 22px;
    height: 22px;
    stroke-width: 2px;
    pointer-events: none;
}
.reset {
    width: 88px;
    height: 47px;
    border: 2px solid #f08384;
    background: #fdf1f1;
    color: #f58a8a;
}
.table-wrap {
    overflow-x: auto;
    scrollbar-width: none;
}
table {
    width: 2083px;
    table-layout: fixed;
    border-collapse: collapse;
}
th, td {
    padding: 3px 50px 0 0;
    text-align: left;
    font-weight: 500;
}
th {
    height: 96px;
    padding-right: 0;
    background: #f0efff;
    color: #636369;
}
th:first-child, td:first-child {
    width: 229px;
    padding-left: 23px;
}
th.num {
    font-weight: 600;
}
td {
    height: 95px;
    color: #8a8a8d;
}
td:nth-child(4) {
    padding-right: 40px;
}
td:nth-child(7) {
    padding-right: 10px;
}
td:nth-child(8) {
    font-weight: 400;
}
tbody tr:nth-child(even) {
    background: #faf9ff;
}
.sort {
    display: flex;
    align-items: center;
    justify-content: space-between;
    width: 154px;
}
.sort.near {
    justify-content: flex-start;
    gap: 10px;
}
.sort svg {
    width: 28px;
    height: 28px;
    stroke-width: 1px;
}
.sort svg.small {
    width: 24px;
    height: 24px;
}
.pager {
    display: flex;
    align-items: center;
    justify-content: space-between;
    height: 98px;
    padding: 2px 23px 0;
}
.step {
    display: flex;
    align-items: center;
    gap: 12px;
    height: 56px;
    padding: 0 20px;
    border: 2px solid #f0f0f2;
    color: #5c5f6b;
    font-weight: 500;
}
.step svg {
    fill: none;
    stroke: #5c6577;
    stroke-width: 2px;
}
.step.next {
    color: #8087a0;
}
.pages {
    display: flex;
    gap: 12px;
    color: #5c5c60;
}
.pages button, .pages span {
    width: 55px;
    height: 63px;
    line-height: 63px;
    text-align: center;
}
.pages .current {
    margin-right: 4px;
    background: #f3f4f6;
    color: #2b2b3b;
}
```
